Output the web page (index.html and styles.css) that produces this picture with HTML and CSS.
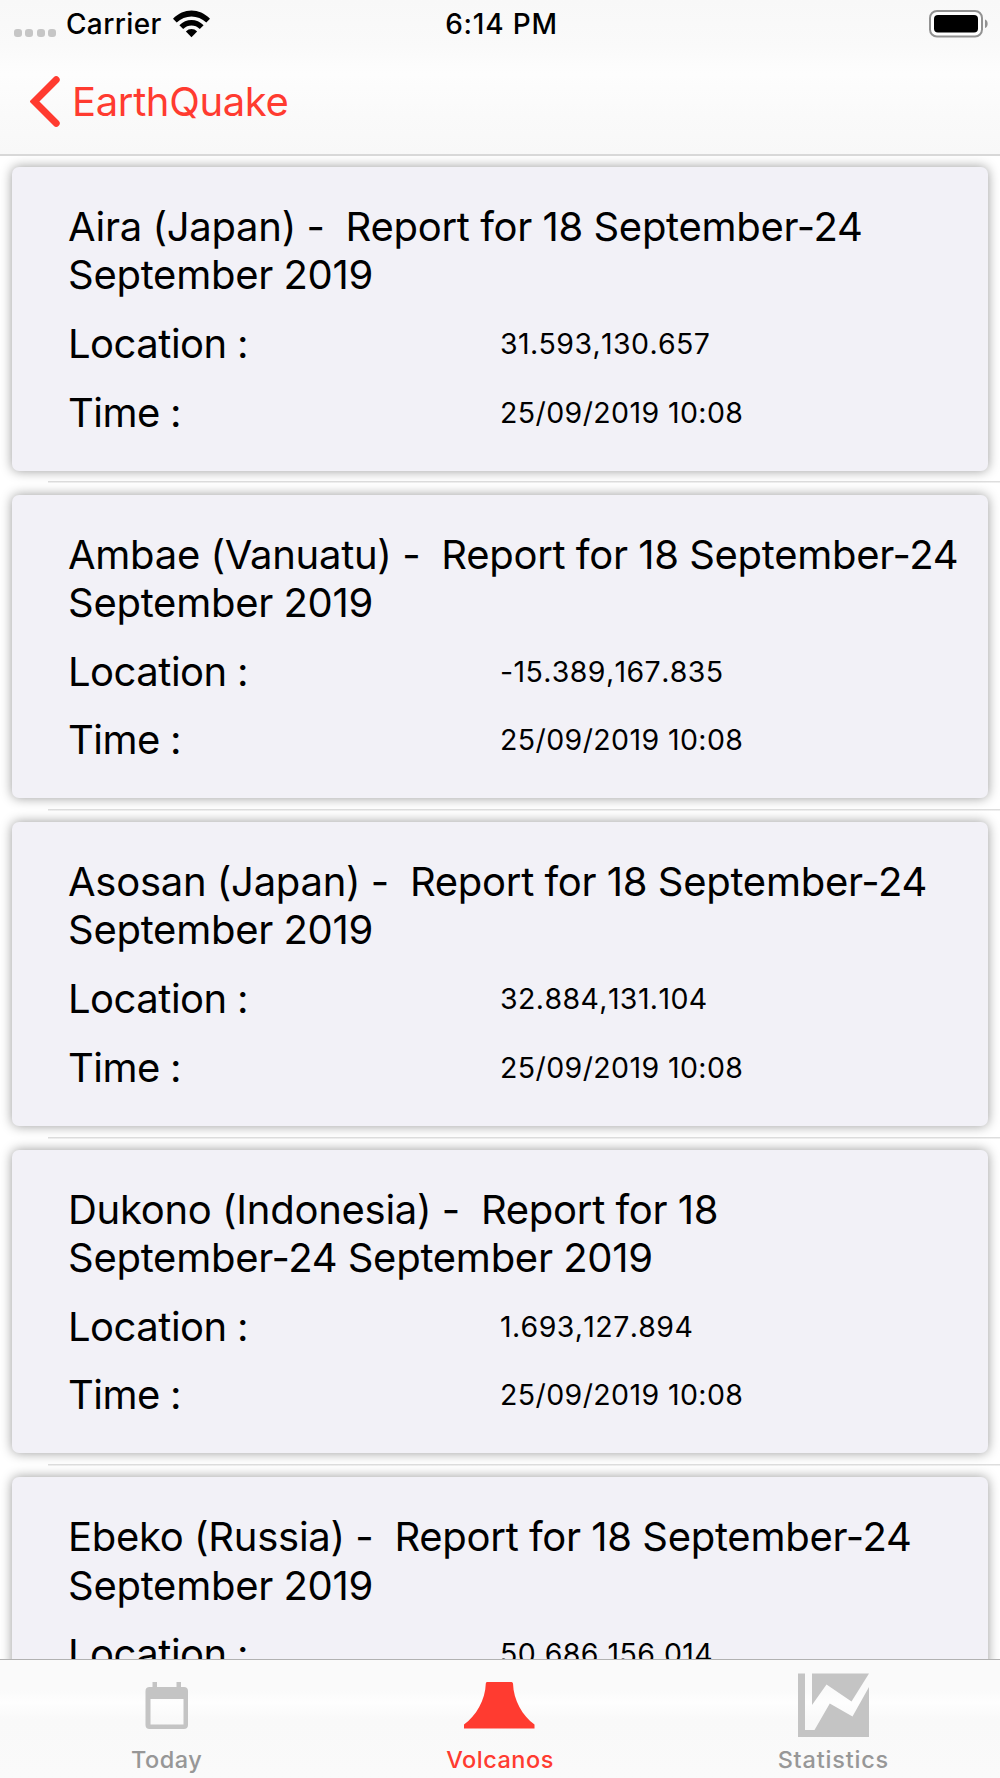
FILE: index.html
```html
<!DOCTYPE html>
<html lang="en">
<head>
  <meta charset="UTF-8">
  <meta name="viewport" content="width=device-width, initial-scale=1.0">
  <title>Volcanos - EarthQuake</title>
  <link rel="stylesheet" href="styles.css">
</head>
<body>

  <!-- Status bar and navigation -->
  <header class="navbar">
    <div class="status">
      <div class="status-left">
        <div class="signal"><i></i><i></i><i></i><i></i></div>
        <span class="carrier">Carrier</span>
        <svg class="wifi" width="37" height="28" viewBox="0 0 37 28">
          <path d="M0 8.8C10.5-2.2 26.500-2.200 37 8.800L33.300 12.600C25 4.400 12 4.400 3.700 12.600Z"/>
          <path d="M6.400 15.200C13.200 8.100 23.800 8.100 30.600 15.200L26.800 18.900C22 14.300 15 14.300 10.200 18.900Z"/>
          <path d="M12.900 21.500C16 18.200 21 18.200 24.100 21.500L18.500 27.200Z"/>
        </svg>
      </div>
      <span class="clock">6:14 PM</span>
      <div class="status-right">
        <svg width="60" height="28" viewBox="0 0 60 28">
          <rect x="1" y="1" width="52" height="25.500" rx="7" fill="#fff" stroke="#929292" stroke-width="2"/>
          <rect x="5" y="5" width="44" height="17.500" rx="4" fill="#000"/>
          <path d="M56 9.500C59.500 10.500 59.500 17 56 18Z" fill="#929292"/>
        </svg>
      </div>
    </div>
    <a class="back" href="#">
      <svg width="30" height="52" viewBox="0 0 30 52">
        <path d="M26.200 4.700L4.500 26.500L26.200 48.200" fill="none" stroke="#ff3b30" stroke-width="7" stroke-linecap="round"/>
      </svg>
      <span>EarthQuake</span>
    </a>
  </header>

  <!-- Volcano reports -->
  <main class="list">
    <div class="row">
      <div class="card">
        <h2>Aira (Japan) -&nbsp; Report for 18 September-24 September 2019</h2>
        <div class="info"><span>Location :</span><span class="value">31.593,130.657</span></div>
        <div class="info"><span>Time :</span><span class="value">25/09/2019 10:08</span></div>
      </div>
    </div>
    <div class="row">
      <div class="card">
        <h2>Ambae (Vanuatu) -&nbsp; Report for 18 September-24 September 2019</h2>
        <div class="info"><span>Location :</span><span class="value">-15.389,167.835</span></div>
        <div class="info"><span>Time :</span><span class="value">25/09/2019 10:08</span></div>
      </div>
    </div>
    <div class="row">
      <div class="card">
        <h2>Asosan (Japan) -&nbsp; Report for 18 September-24 September 2019</h2>
        <div class="info"><span>Location :</span><span class="value">32.884,131.104</span></div>
        <div class="info"><span>Time :</span><span class="value">25/09/2019 10:08</span></div>
      </div>
    </div>
    <div class="row">
      <div class="card">
        <h2>Dukono (Indonesia) -&nbsp; Report for 18<br>September-24 September 2019</h2>
        <div class="info"><span>Location :</span><span class="value">1.693,127.894</span></div>
        <div class="info"><span>Time :</span><span class="value">25/09/2019 10:08</span></div>
      </div>
    </div>
    <div class="row">
      <div class="card">
        <h2>Ebeko (Russia) -&nbsp; Report for 18 September-24 September 2019</h2>
        <div class="info"><span>Location :</span><span class="value">50.686,156.014</span></div>
        <div class="info"><span>Time :</span><span class="value">25/09/2019 10:08</span></div>
      </div>
    </div>
  </main>

  <!-- Tab bar -->
  <nav class="tabbar">
    <a class="tab" href="#">
      <svg width="72" height="66" viewBox="0 0 72 66">
        <path fill="#c4c4c4" fill-rule="evenodd" d="M21.500 9H26V14H45.500V9H50V14H53C55.500 14 57 15.500 57 18V52C57 54.500 55.500 56 53 56H18.500C16 56 14.500 54.500 14.500 52V18C14.500 15.500 16 14 18.500 14H21.500ZM19.500 26V51.500H52.500V26Z"/>
      </svg>
      <span>Today</span>
    </a>
    <a class="tab active" href="#">
      <svg width="72" height="66" viewBox="0 0 72 66">
        <path fill="#ff3b30" d="M23 9H47.500Q48.800 9 49 10.500C49.500 27 58.500 43 70.500 51.500V55.500H0V51.500C12 43 21.300 27 21.800 10.500Q21.800 9 23 9Z"/>
      </svg>
      <span>Volcanos</span>
    </a>
    <a class="tab stats" href="#">
      <svg width="72" height="66" viewBox="0 0 72 66">
        <path fill="#c4c4c4" d="M1 0.500H8V57H17.500L32.800 30.500L55.500 43.500L72 14V64H1ZM15 0.500H72L54.500 28.500L29.500 11.500L15 32Z"/>
      </svg>
      <span>Statistics</span>
    </a>
  </nav>

</body>
</html>
```
FILE: styles.css
```css
/* Basic Reset */
* {
  margin: 0;
  padding: 0;
  box-sizing: border-box;
}

body {
  width: 1000px;
  height: 1778px;
  overflow: hidden;
  display: flex;
  flex-direction: column;
  background-color: #fff;
  color: #000;
  font-family: Inter, sans-serif;
}

a {
  text-decoration: none;
}

svg {
  display: block;
  flex: none;
}

/* Header */
.navbar {
  flex: none;
  height: 156px;
  border-bottom: 2px solid #d8d8d8;
  background: linear-gradient(#f8f8f8, #fafafa 30%, #fdfdfd 48%, #fafafa 75%, #f8f8f8);
}

.status {
  display: grid;
  grid-template-columns: 1fr auto 1fr;
  align-items: center;
  height: 48px;
  padding: 0 11px 0 14px;
  font-size: 28px;
  font-weight: 450;
  letter-spacing: 0.400px;
}

.status-left {
  display: flex;
  align-items: center;
}

.signal {
  display: flex;
  gap: 3.3px;
  margin: 17px 10px 0 0;
}

.signal i {
  width: 8px;
  height: 8px;
  border-radius: 3px;
  background-color: #c6c6c6;
}

.wifi {
  margin-left: 11px;
}

.clock {
  letter-spacing: 0.800px;
}

.status-right {
  display: flex;
  justify-content: flex-end;
}

.back {
  display: flex;
  align-items: center;
  width: 300px;
  height: 106px;
  padding: 0 0 0 30px;
  color: #ff3b30;
  font-size: 40px;
  letter-spacing: -0.350px;
}

.back span {
  margin-left: 12px;
}

/* Report List */
.list {
  flex: 1;
  min-height: 0;
  overflow: hidden;
}

.row {
  height: 327.6px;
  padding: 11px 12px 0;
  background: linear-gradient(#dedede, #dedede) 48px 325.400px / 100% 1.500px no-repeat;
}

.card {
  height: 303.5px;
  padding: 36px 10px 0 56px;
  border-radius: 7px;
  background-color: #f2f1f7;
  box-shadow: 0 0 12px rgba(0, 0, 0, 0.4);
}

.card h2 {
  margin-bottom: -1px;
  font-size: 40px;
  font-weight: 400;
  line-height: 48.3px;
  letter-spacing: -0.270px;
  word-spacing: -0.500px;
}

.info {
  display: grid;
  grid-template-columns: 432px 1fr;
  align-items: center;
  height: 48px;
  margin-top: 20.500px;
  font-size: 40px;
  letter-spacing: -0.500px;
  word-spacing: -0.500px;
}

.value {
  font-size: 28.500px;
  font-kerning: none;
  letter-spacing: 0.400px;
  word-spacing: 0;
}

/* Tab Bar */
.tabbar {
  flex: none;
  display: grid;
  grid-template-columns: repeat(3, 1fr);
  height: 119px;
  border-top: 1px solid #b2b2b2;
  background: linear-gradient(#fafafa, #fafafa 25%, #fefefe 36%, #f9f9f9 50%, #fafafa);
}

.tab {
  display: flex;
  flex-direction: column;
  align-items: center;
  padding-top: 13px;
  color: #979797;
  font-size: 23.500px;
  font-weight: 500;
  letter-spacing: 0.500px;
}

.tab span {
  margin-top: 6px;
}

.tab.active {
  color: #ff3b30;
}

.tab.stats {
  letter-spacing: 0.800px;
}
```
